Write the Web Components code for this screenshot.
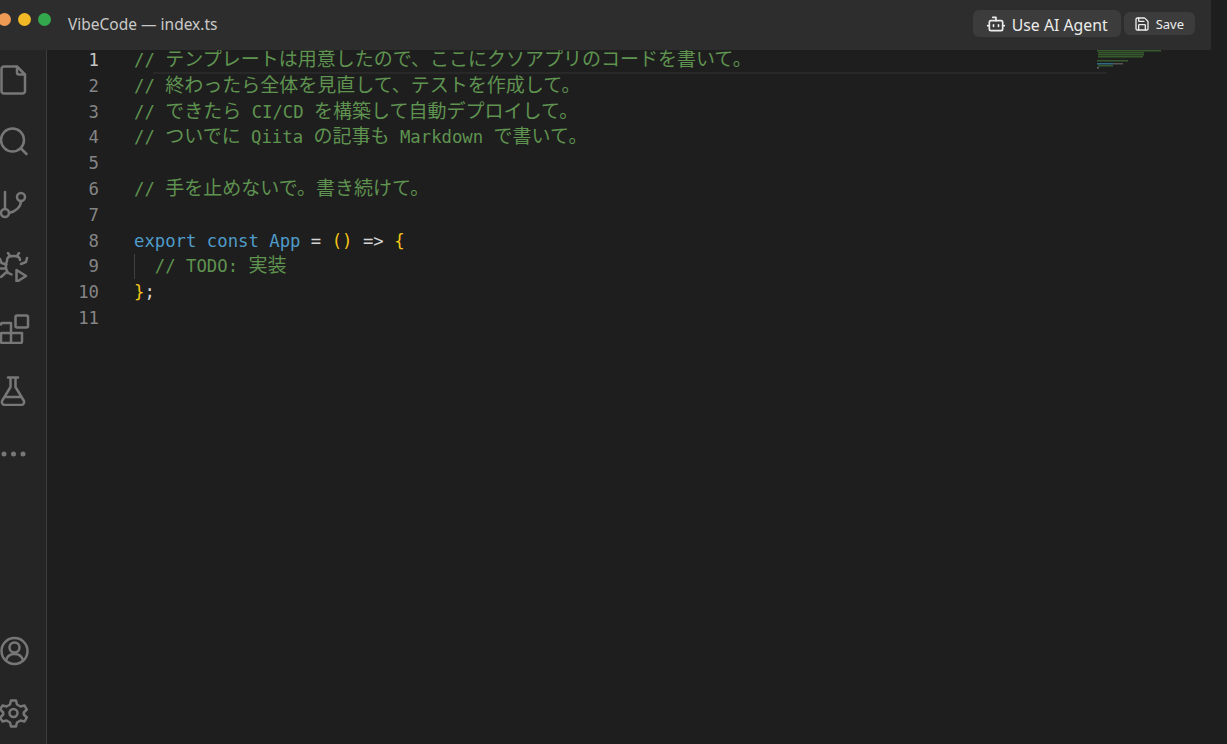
<!DOCTYPE html>
<html lang="ja">
<head>
<meta charset="utf-8">
<title>VibeCode</title>
<style>
  html, body { margin: 0; height: 100%; background: #1e1e1e; overflow: hidden; }
</style>
</head>
<body>
<vibe-app></vibe-app>
<script>
const ICONS = {
    file: '<path d="M4 1.500H17l8 8V26a2.500 2.500 0 0 1-2.500 2.500H4A2.500 2.500 0 0 1 1.500 26V4A2.500 2.500 0 0 1 4 1.500z"/><path d="M17 2v5.500a2 2 0 0 0 2 2h6"/>',
    search: '<circle cx="12.500" cy="13" r="11.500"/><path d="m21 21.500 5.500 5.500"/>',
    branch: '<path d="M5 2v17"/><circle cx="5" cy="23" r="4"/><circle cx="21" cy="7" r="4"/><path d="M21 11c0 6-6 11-12 12"/>',
    bug: '<path d="M8 1l2 3M19 1l-2 3M7 8c0-2 2-4 6.500-4s6.500 2 6.500 4M7 9c-1.500 3-1.500 8 1 12M8.500 21l3 1.500"/><path d="M0 7l1.500 4 5 1.500M27 6l-1 4-5 2M0 16.500h5.500M1 25l5-4.500"/><path d="M16.500 18l9.500 6-9.500 6z"/>',
    blocks: '<rect x="15.500" y="1.500" width="12.500" height="12" rx="1.500"/><path d="M1 10.500Q1 9 2.500 9H11V29M1 19H22V27.500Q22 29 20.500 29H2.500Q1 29 1 27.500z"/>',
    flask: '<path d="M8 1.500h10M10.500 2v9L2.300 24.500A3 3 0 0 0 5 29h16a3 3 0 0 0 2.700-4.500L15.500 11V2M6 21h14"/>',
    dots: '<g fill="currentColor" stroke="none"><circle cx="4" cy="15" r="2.500"/><circle cx="13.500" cy="15" r="2.500"/><circle cx="23" cy="15" r="2.500"/></g>',
    account: '<circle cx="14.500" cy="15" r="13"/><circle cx="14.500" cy="11.500" r="5"/><path d="M6 24.500c1-4 4-6.500 8.500-6.500s7.500 2.500 8.500 6.500"/>',
    gear: '<circle cx="13.500" cy="15" r="4"/><path d="M11 2.500h5l1 4 3.500 2 4-1 2.300 4-3 3 0 2 3 3-2.300 4-4-1-3.500 2-1 4h-5l-1-4-3.500-2-4 1-2.300-4 3-3v-2l-3-3 2.300-4 4 1 3.500-2z"/>'
};

class ActivityIcon extends HTMLElement {
    connectedCallback() {
        const name = this.getAttribute('name');
        this.attachShadow({ mode: 'open' }).innerHTML = `
            <style>
                :host { display: block; width: 30px; height: 30px; color: #777; }
                svg { display: block; width: 30px; height: 30px; fill: none; stroke: currentColor;
                      stroke-width: 2.500; stroke-linecap: round; stroke-linejoin: round; }
            </style>
            <svg viewBox="0 0 30 30">${ICONS[name]}</svg>`;
    }
}
customElements.define('activity-icon', ActivityIcon);

class ActivityBar extends HTMLElement {
    constructor() {
        super();
        this.attachShadow({ mode: 'open' }).innerHTML = `
            <style>
                :host { display: flex; flex-direction: column; justify-content: space-between;
                        flex: none; width: 47px; box-sizing: border-box; padding: 15px 0 16px;
                        background: #252526; border-right: 1px solid #3d3d3d; }
                .group { display: flex; flex-direction: column; gap: 32.300px; }
            </style>
            <div class="group">
                <activity-icon name="file"></activity-icon>
                <activity-icon name="search"></activity-icon>
                <activity-icon name="branch"></activity-icon>
                <activity-icon name="bug"></activity-icon>
                <activity-icon name="blocks"></activity-icon>
                <activity-icon name="flask"></activity-icon>
                <activity-icon name="dots"></activity-icon>
            </div>
            <div class="group">
                <activity-icon name="account"></activity-icon>
                <activity-icon name="gear"></activity-icon>
            </div>`;
    }
}
customElements.define('activity-bar', ActivityBar);

class ToolButton extends HTMLElement {
    constructor() {
        super();
        this.attachShadow({ mode: 'open' }).innerHTML = `
            <style>
                :host { display: inline-flex; align-items: center; box-sizing: border-box;
                        background: #3c3c3c; color: #ececec; border-radius: 6px; white-space: nowrap; }
                :host([size=big]) { height: 27px; padding: 2px 13px 0; gap: 6px; font-size: 15.800px; }
                :host([size=small]) { height: 23px; padding: 1px 11px 0 10px; gap: 6px; font-size: 13px; }
                ::slotted(svg) { display: block; fill: none; stroke: currentColor; stroke-width: 2;
                                 stroke-linecap: round; stroke-linejoin: round; margin-top: -2px; }
                :host([size=small]) ::slotted(svg) { margin-top: -1px; }
            </style>
            <slot name="icon"></slot><slot></slot>`;
    }
}
customElements.define('tool-button', ToolButton);

class TitleBar extends HTMLElement {
    constructor() {
        super();
        this.attachShadow({ mode: 'open' }).innerHTML = `
            <style>
                :host { display: flex; align-items: center; flex: none; height: 50px; width: 1211px;
                        box-sizing: border-box; padding: 0 16px 0 0; background: #2d2d2d;
                        font-family: "Noto Sans", "Open Sans", sans-serif; position: relative; z-index: 2; }
                .lights { display: flex; gap: 7px; margin: 13px 17px 0 -2px; align-self: flex-start; }
                .lights i { display: block; width: 13px; height: 13px; border-radius: 50%; }
                .title { color: #c9c9c9; font-size: 15.500px; margin-top: -2px; }
                .actions { margin-left: auto; display: flex; align-items: center; gap: 3px; margin-top: -3px; }
            </style>
            <div class="lights">
                <i style="background:#ee9a55"></i>
                <i style="background:#f2b926"></i>
                <i style="background:#34a84c"></i>
            </div>
            <div class="title">VibeCode — index.ts</div>
            <div class="actions">
                <tool-button size="big">
                    <svg slot="icon" width="20" height="20" viewBox="0 0 24 24"><path d="M12 8V4H8"/><rect x="4" y="8" width="16" height="12" rx="2"/><path d="M2 14h2M20 14h2M15 13v2M9 13v2"/></svg>
                    Use AI Agent
                </tool-button>
                <tool-button size="small">
                    <svg slot="icon" width="16" height="16" viewBox="0 0 24 24"><path d="M15.200 3a2 2 0 0 1 1.400.6l3.800 3.800a2 2 0 0 1 .6 1.400V19a2 2 0 0 1-2 2H5a2 2 0 0 1-2-2V5a2 2 0 0 1 2-2z"/><path d="M17 21v-7a1 1 0 0 0-1-1H8a1 1 0 0 0-1 1v7M7 3v4a1 1 0 0 0 1 1h7"/></svg>
                    Save
                </tool-button>
            </div>`;
    }
}
customElements.define('title-bar', TitleBar);

const CODE = [
    [['c', '// テンプレートは用意したので、ここにクソアプリのコードを書いて。']],
    [['c', '// 終わったら全体を見直して、テストを作成して。']],
    [['c', '// できたら CI/CD を構築して自動デプロイして。']],
    [['c', '// ついでに Qiita の記事も Markdown で書いて。']],
    [],
    [['c', '// 手を止めないで。書き続けて。']],
    [],
    [['k', 'export const App'], ['p', ' = '], ['b', '()'], ['p', ' => '], ['b', '{']],
    [['p', '  '], ['c', '// TODO: 実装']],
    [['b', '}'], ['p', ';']],
    []
];

class CodeEditor extends HTMLElement {
    constructor() {
        super();
        const rows = CODE.map((tokens, i) => {
            const html = tokens.map(([cls, text]) => {
                const runs = text.match(/[\x00-\x7f]+|[^\x00-\x7f]+/g) || [];
                return `<span class="${cls}">` + runs.map(r =>
                    /^[\x00-\x7f]/.test(r) ? r.replace(/>/g, '&gt;') : `<span class="j">${r}</span>`).join('') + '</span>';
            }).join('');
            return `<div class="row${i === 0 ? ' current' : ''}"><div class="num">${i + 1}</div><div class="text">${html}</div></div>`;
        }).join('');

        this.attachShadow({ mode: 'open' }).innerHTML = `
            <style>
                :host { display: block; flex: 1; position: relative; margin-top: -2px; background: #1e1e1e;
                        font-family: "DejaVu Sans Mono", monospace; font-size: 17.300px; overflow: hidden; }
                .row { display: flex; height: 25.800px; line-height: 25.800px; white-space: pre; }
                .num { width: 52px; flex: none; text-align: right; color: #858585; }
                .current .num { color: #c6c6c6; }
                .text { margin-left: 35px; }
                .j { font-family: "Noto Sans CJK JP", sans-serif; font-size: 19px; line-height: 0; }
                .c { color: #5f9350; }
                .k { color: #4f9bc9; }
                .p { color: #d4d4d4; }
                .b { color: #f5c518; }
                .highlight { position: absolute; left: 106px; top: 0; width: 954px; height: 26px;
                             box-sizing: border-box; border-bottom: 2px solid #282828; }
                .guide { position: absolute; left: 87px; top: 206px; width: 1px; height: 25px; background: #404040; }
                .minimap { position: absolute; left: 1050px; top: 2px; }
            </style>
            <div class="highlight"></div>
            <div class="guide"></div>
            ${rows}
            <svg class="minimap" width="66" height="22" viewBox="0 0 66 22">
                <g fill="#365a2e">
                    <rect x="0" y="0" width="64" height="1.500"/>
                    <rect x="1" y="2" width="46" height="1.500"/>
                    <rect x="1" y="4" width="46" height="1.500"/>
                    <rect x="1" y="6" width="45" height="1.500"/>
                    <rect x="0" y="10" width="31" height="1.500"/>
                </g>
                <rect x="0" y="13" width="16" height="1.500" fill="#2f6a86"/>
                <rect x="16" y="13" width="10" height="1.500" fill="#555"/>
                <rect x="1" y="15" width="15" height="1.500" fill="#365a2e"/>
                <rect x="0" y="17" width="2" height="1.500" fill="#666"/>
            </svg>`;
    }
}
customElements.define('code-editor', CodeEditor);

class VibeApp extends HTMLElement {
    constructor() {
        super();
        this.attachShadow({ mode: 'open' }).innerHTML = `
            <style>
                :host { display: flex; flex-direction: column; height: 744px; width: 1227px; overflow: hidden; }
                .body { display: flex; flex: 1; min-height: 0; }
            </style>
            <title-bar></title-bar>
            <div class="body">
                <activity-bar></activity-bar>
                <code-editor></code-editor>
            </div>`;
    }
}
customElements.define('vibe-app', VibeApp);
</script>
</body>
</html>
